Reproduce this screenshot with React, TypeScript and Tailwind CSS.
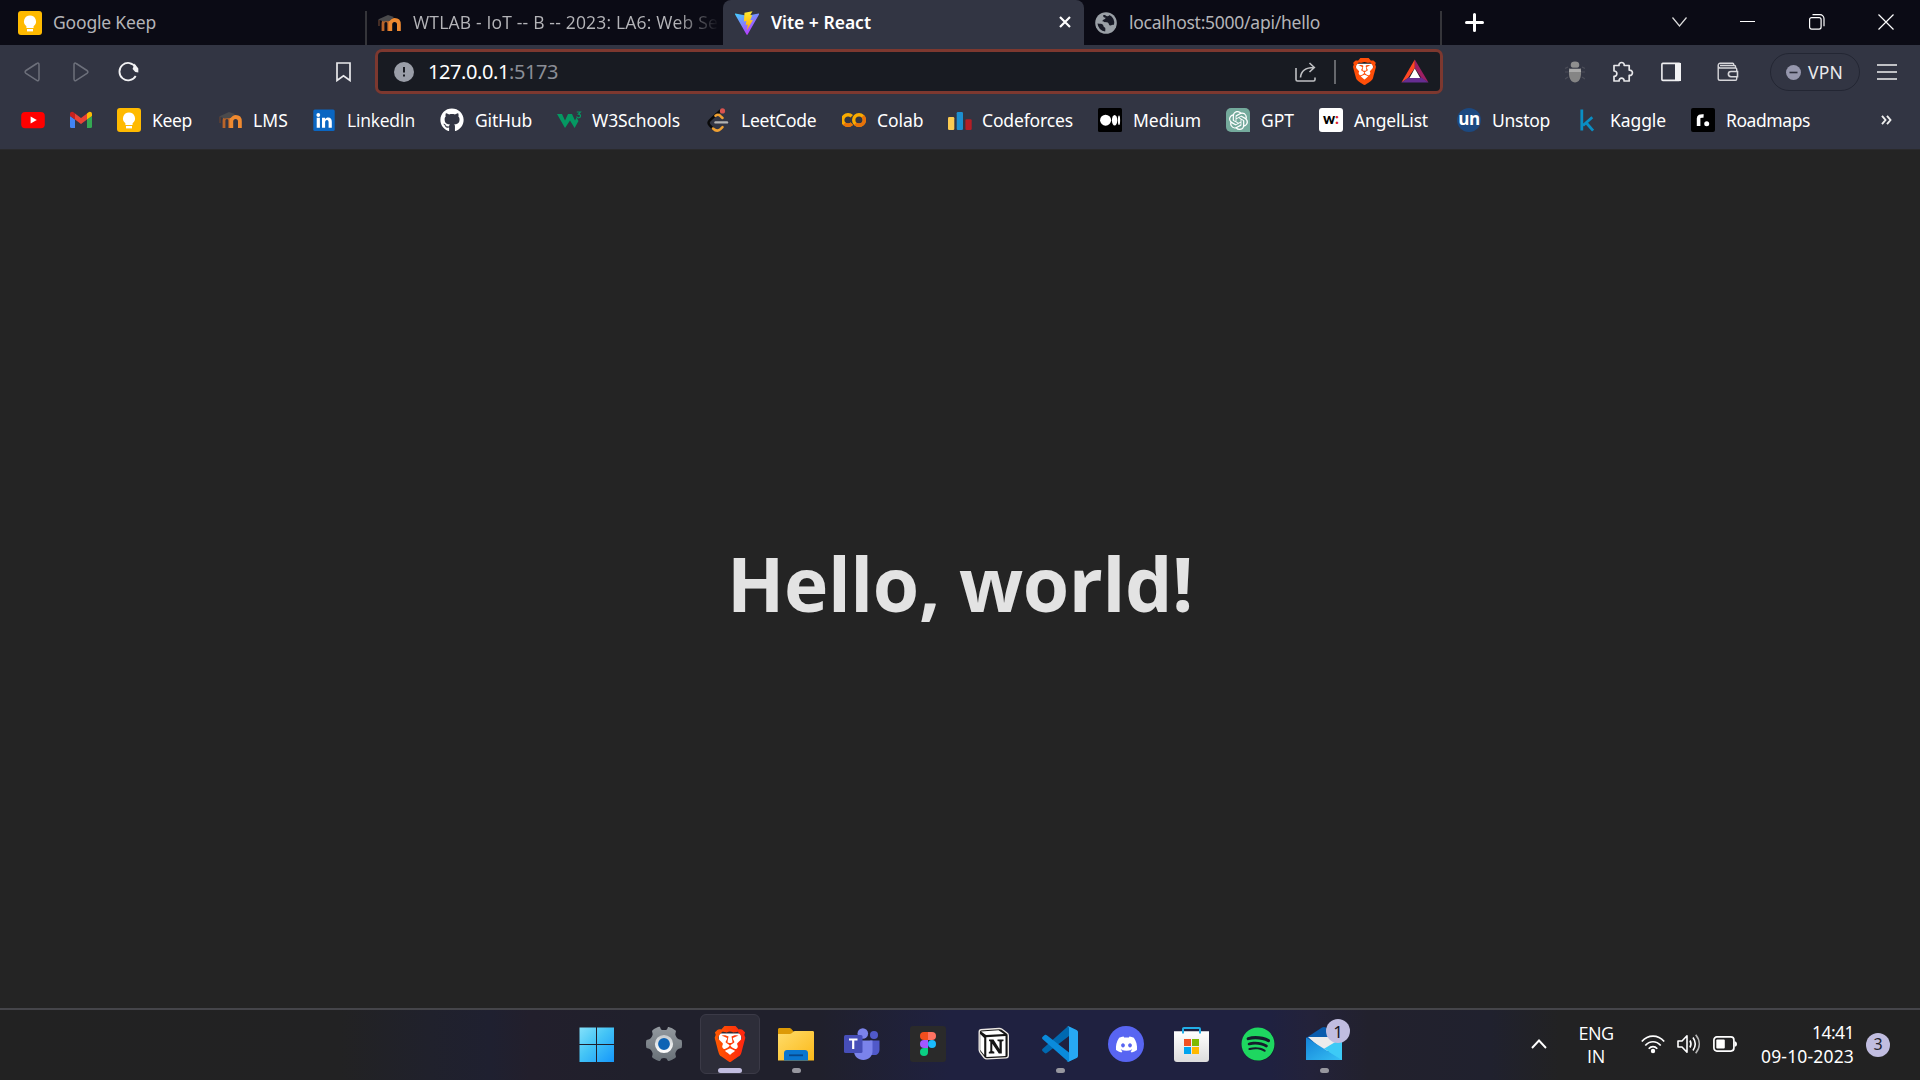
import React, { useLayoutEffect, useRef, useState } from "react";
import { FaGithub, FaSpotify, FaDiscord } from "react-icons/fa";
import { SiBrave, SiOpenai } from "react-icons/si";

const NOTO = "font-['Noto_Sans',sans-serif]";
const OPEN = "font-['Open_Sans',sans-serif]";

/* Tracks its text so that the line is exactly `w` pixels wide. */
function Fit({ w, className = "", children }: { w: number; className?: string; children: string }) {
  const ref = useRef<HTMLSpanElement>(null);
  const [spacing, setSpacing] = useState(0);
  useLayoutEffect(() => {
    const el = ref.current;
    if (!el) return;
    const natural = el.getBoundingClientRect().width;
    setSpacing((w - natural) / children.length);
  }, []);
  return (
    <span ref={ref} className={`inline-block whitespace-pre ${className}`} style={{ letterSpacing: spacing }}>
      {children}
    </span>
  );
}

function Svg({ w, h = w, className = "", children }: { w: number; h?: number; className?: string; children: React.ReactNode }) {
  return (
    <svg width={w} height={h} viewBox={`0 0 ${w} ${h}`} fill="none" className={`block shrink-0 ${className}`}>
      {children}
    </svg>
  );
}

const KeepIcon = () => (
  <Svg w={24}>
    <rect width="24" height="24" rx="3" fill="#ffba00" />
    <path d="M12 4.5a6 6 0 0 0-3.6 10.8v1.7h7.2v-1.7A6 6 0 0 0 12 4.5z" fill="#fff" />
    <rect x="9" y="18" width="6" height="2.4" fill="#fff" />
  </Svg>
);

const MoodleIcon = () => (
  <Svg w={24}>
    <path d="M6 20v-7.5c0-2 1.4-3 3-3s2.700 1 2.700 3V20" stroke="#b9642a" strokeWidth="2.800" />
    <path d="M13.300 20v-6.500c0-3 1.800-4.500 4.300-4.500s4.300 1.500 4.300 4.500V20" stroke="#f08a30" strokeWidth="3.800" />
    <path d="M1 8.500 11 4l6 2-4.500 4-6 .500z" fill="#4a4a4c" />
    <path d="M2 9v6" stroke="#6b4330" strokeWidth="1.200" />
  </Svg>
);

const YoutubeIcon = () => (
  <Svg w={24}>
    <rect x=".2" y="4" width="23.600" height="16.300" rx="4" fill="#f00" />
    <path d="m9.600 8.600 6.200 3.500-6.200 3.500z" fill="#fff" />
  </Svg>
);

const GmailIcon = () => (
  <Svg w={24}>
    <path d="M1 8v10.500A1.500 1.500 0 0 0 2.500 20H6v-8.500z" fill="#4285f4" />
    <path d="M23 8v10.500a1.500 1.500 0 0 1-1.500 1.500H18v-8.500z" fill="#34a853" />
    <path d="M18 5.500v6L23 8V6c0-2-2.200-3-3.800-1.500z" fill="#fbbc04" />
    <path d="M6 5.500v6L1 8V6c0-2 2.200-3 3.800-1.500z" fill="#c5221f" />
    <path d="m6 5.500 6 4.500 6-4.500v6L12 16l-6-4.500z" fill="#ea4335" />
  </Svg>
);

const LinkedInIcon = () => (
  <Svg w={24}>
    <rect x="1.300" y="1.500" width="21.400" height="21.400" rx="1.500" fill="#0a66c2" />
    <circle cx="6.300" cy="7" r="1.900" fill="#fff" />
    <path d="M4.700 9.700h3.200v10H4.700zM10 9.700h3v1.400c.8-1.200 1.800-1.700 3.100-1.700 2.700 0 3.700 1.700 3.700 4.400v5.900h-3.200v-5.300c0-1.500-.4-2.400-1.600-2.400-1.300 0-1.900.9-1.900 2.400v5.300H10z" fill="#fff" />
  </Svg>
);

const ColabIcon = () => (
  <Svg w={24}>
    <path d="M9.800 8.300A5.300 5.300 0 1 0 9.800 15.700" stroke="#f9ab00" strokeWidth="3.400" />
    <path d="M2.300 15.700a5.300 5.300 0 0 0 7.500 0" stroke="#e8710a" strokeWidth="3.400" />
    <circle cx="17" cy="12" r="5.300" stroke="#f9ab00" strokeWidth="3.400" />
    <path d="M20.800 8.200a5.300 5.300 0 0 1-7.500 7.500" stroke="#e8710a" strokeWidth="3.400" />
  </Svg>
);

const CodeforcesIcon = () => (
  <Svg w={25} h={24}>
    <rect x="1" y="9" width="6.300" height="13" rx="1.200" fill="#fbcb52" />
    <rect x="9.700" y="4" width="6.300" height="18" rx="1.200" fill="#1c8fd0" />
    <rect x="18.400" y="11.300" width="6.300" height="10.700" rx="1.200" fill="#b51e26" />
  </Svg>
);

const MediumIcon = () => (
  <Svg w={24}>
    <rect width="24" height="24" rx="1.500" fill="#000" />
    <circle cx="7.600" cy="12.200" r="5.500" fill="#fff" />
    <ellipse cx="16.600" cy="12.200" rx="2.700" ry="5.200" fill="#fff" />
    <ellipse cx="21" cy="12.200" rx="1.100" ry="4.800" fill="#fff" />
  </Svg>
);

const GptIcon = () => (
  <span className="flex size-6 items-center justify-center rounded-tl-[5px] rounded-tr-[5px] rounded-bl-[5px] bg-[#74aa9c]">
    <SiOpenai className="size-[19px] text-white" />
  </span>
);

const LeetIcon = () => (
  <Svg w={24}>
    <path d="M14.500 2.500 3.800 12.300c-1.700 1.700-1.700 3.300 0 5l3.400 3.500" stroke="#090909" strokeWidth="2.500" strokeLinecap="round" />
    <path d="M16.500 10 14 7.600c-1.500-1.200-3-1.100-4.500.1M7 20.500c2.600 2.600 5.400 2.600 7.500.6l2-2" stroke="#f0a132" strokeWidth="2.500" strokeLinecap="round" />
    <path d="M9.500 14.400h11.500" stroke="#b3b3b3" strokeWidth="2.400" strokeLinecap="round" />
    <circle cx="16.500" cy="2.900" r="2.600" fill="#d9534f" />
  </Svg>
);

const AngelIcon = () => (
  <span className="flex size-6 items-center justify-center rounded-[3px] bg-white pb-[3px] font-['Lato',sans-serif] text-[15px] leading-none font-black text-black">
    w<span className="text-[#e0242b]">:</span>
  </span>
);

const UnstopIcon = () => (
  <span className="flex size-6 items-center justify-center rounded-full bg-[#1c4980] pb-[3px] font-['Open_Sans',sans-serif] text-[17px] leading-none font-bold tracking-[-0.5px] text-white">
    un
  </span>
);

const KaggleIcon = () => (
  <Svg w={24}>
    <path d="M6.800 1.500v21M17.300 9.300 8 17.500M10.500 14l7.600 8.600" stroke="#0a8ec4" strokeWidth="2.800" />
  </Svg>
);

const RoadmapIcon = () => (
  <Svg w={24}>
    <rect width="24" height="24" rx="2" fill="#000" />
    <path d="M7.600 18V10.500c0-2 1.400-2.800 5-2.500" stroke="#fff" strokeWidth="3.600" />
    <circle cx="15.700" cy="15.700" r="2.500" fill="#fff" />
  </Svg>
);

const W3Icon = () => (
  <Svg w={25} h={24}>
    <path d="M0 6h5l3 6.500L11 6h4l3 6.500 1.500-3 2 3.500L17.600 20 13 12.500 8 20z" fill="#059862" />
    <path d="M19.800 4h3.600l-2 2.200c3 .2 2.600 3.600.2 3.600-1 0-1.600-.4-2-1.200" stroke="#059862" strokeWidth="1.200" />
  </Svg>
);

const ViteIcon = () => (
  <Svg w={24}>
    <defs>
      <linearGradient id="va" x1="0" y1="0" x2=".6" y2="1">
        <stop stopColor="#41d1ff" />
        <stop offset="1" stopColor="#bd34fe" />
      </linearGradient>
      <linearGradient id="vb" x1="0" y1="0" x2="0" y2="1">
        <stop stopColor="#ffea30" />
        <stop offset="1" stopColor="#ffa800" />
      </linearGradient>
    </defs>
    <path d="M.4 2.600 12 4.700l11.600-2.100c.4 0 .6.400.4.800L12.600 23.500c-.3.500-.8.500-1.100 0L.1 3.400c-.3-.4 0-.9.300-.8z" fill="url(#va)" />
    <path d="m17.500.2-8 1.500-.6 8.700 2.500-.5-.7 4.200 2.100-.6-.9 5.700 6-10.300-2.700.4 2-5h-2z" fill="url(#vb)" />
  </Svg>
);

const GlobeIcon = () => (
  <Svg w={22}>
    <circle cx="11" cy="11" r="10.800" fill="#9aa0a6" />
    <path d="M2.500 11.500c2.500.2 5 .3 5.600 1.500.5 1 .3 2 1.700 2.600.8.400.6 2 .4 3.900A8.700 8.700 0 0 1 2.500 11.500zM8.300 3c-.4 2 .3 2.500 2.300 2.700-.5 2.500-3 1.200-3 3.300 0 1.800 4.600.7 5.700 2 .8.900.4 2.400 2 2.500 1.300.1 2-.8 3.700-.7A8.700 8.700 0 0 0 14.500 3c-.4 1.200-2 1.500-3 .9C10.600 3.400 9.800 2.600 8.300 3z" fill="#181a26" />
  </Svg>
);

function BraveSmall() {
  return (
    <span className="relative flex h-[27px] w-6 items-center justify-center">
      <svg viewBox="0 0 24 24" className="absolute size-[27px]">
        <path d="M4.500 5h15v8.500L12 20.500l-7.500-7z" fill="#fff" />
      </svg>
      <SiBrave className="relative size-[27px] shrink-0 text-[#ff4e08]" />
    </span>
  );
}

function BraveLarge() {
  return (
    <span className="relative flex h-9 w-[30px] items-center justify-center">
      <svg viewBox="0 0 24 24" className="absolute size-9">
        <defs>
          <linearGradient id="lion" x1="0" y1="0" x2="1" y2="0">
            <stop stopColor="#ff5a00" />
            <stop offset="1" stopColor="#ff2410" />
          </linearGradient>
        </defs>
        <path d="M4.500 5h15v8.500L12 20.500l-7.500-7z" fill="#fff" />
      </svg>
      <SiBrave className="relative size-9 shrink-0 fill-[url(#lion)]" />
    </span>
  );
}

const bookmarks: { icon: React.ReactNode; label: string; slot: number; w: number; open?: boolean }[] = [
  { icon: <KeepIcon />, label: "Keep", slot: 41, w: 40 },
  { icon: <MoodleIcon />, label: "LMS", slot: 34, w: 35 },
  { icon: <LinkedInIcon />, label: "LinkedIn", slot: 68, w: 68, open: true },
  { icon: <FaGithub className="size-6 text-white" />, label: "GitHub", slot: 57, w: 57 },
  { icon: <W3Icon />, label: "W3Schools", slot: 89, w: 88 },
  { icon: <LeetIcon />, label: "LeetCode", slot: 76, w: 75.5 },
  { icon: <ColabIcon />, label: "Colab", slot: 45, w: 46.500 },
  { icon: <CodeforcesIcon />, label: "Codeforces", slot: 91, w: 91 },
  { icon: <MediumIcon />, label: "Medium", slot: 68, w: 68 },
  { icon: <GptIcon />, label: "GPT", slot: 33, w: 33 },
  { icon: <AngelIcon />, label: "AngelList", slot: 78, w: 74 },
  { icon: <UnstopIcon />, label: "Unstop", slot: 58, w: 58 },
  { icon: <KaggleIcon />, label: "Kaggle", slot: 56, w: 56 },
  { icon: <RoadmapIcon />, label: "Roadmaps", slot: 84, w: 84 },
];

function TabStrip() {
  return (
    <div className={`flex h-[45px] items-stretch bg-[#0b0b15] text-[17.500px] leading-6 text-[#b4b4b8] ${NOTO}`}>
      <div className="flex w-[365px] items-center pl-[18px]">
        <KeepIcon />
        <Fit w={103} className="ml-[11px] pb-[1px]">Google Keep</Fit>
      </div>
      <div className="mt-[11px] w-[2px] bg-[#35353a]" />
      <div className="flex w-[356px] items-center pl-[10px]">
        <MoodleIcon />
        <div className={`ml-3 w-[306px] pb-[1px] [mask-image:linear-gradient(90deg,#000_86%,transparent)] ${OPEN}`}>
          <Fit w={305}>WTLAB - IoT -- B -- 2023: LA6: Web Se</Fit>
        </div>
      </div>
      <div className="flex w-[361px] items-center rounded-t-[8px] bg-[#323543] pl-3">
        <ViteIcon />
        <Fit w={100} className="ml-3 pb-[1px] font-semibold text-white">Vite + React</Fit>
        <Svg w={12} className="mb-[1px] ml-[188px]">
          <path d="m1 1 10 10M11 1 1 11" stroke="#fff" strokeWidth="2.200" />
        </Svg>
      </div>
      <div className="flex w-[356px] items-center pl-[11px]">
        <GlobeIcon />
        <Fit w={191} className="ml-3 pb-[1px]">localhost:5000/api/hello</Fit>
      </div>
      <div className="mt-[11px] w-[2px] bg-[#35353a]" />
      <div className="flex flex-1 items-center pl-[23px]">
        <Svg w={19}>
          <path d="M9.500 1.500v16M1.500 9.500h16" stroke="#fff" strokeWidth="3" strokeLinecap="round" />
        </Svg>
        <Svg w={15} h={10} className="mb-[2px] ml-[188px]">
          <path d="m.5.5 7 8.500 7-8.500" stroke="#ddd" strokeWidth="1.200" />
        </Svg>
        <Svg w={15} h={2} className="mb-[1px] ml-[53px]">
          <path d="M0 .5h15" stroke="#fff" strokeWidth="1" />
        </Svg>
        <Svg w={16} className="mb-[2px] ml-[54px]">
          <rect x=".6" y="3.600" width="11.500" height="11.500" rx="2" stroke="#fff" strokeWidth="1.200" />
          <path d="M3.500.7H11a4 4 0 0 1 4 4v7.500" stroke="#fff" strokeWidth="1.200" />
        </Svg>
        <Svg w={16} className="mb-[2px] ml-[53px]">
          <path d="m.5.5 15 15M15.500.5l-15 15" stroke="#fff" strokeWidth="1.200" />
        </Svg>
      </div>
    </div>
  );
}

function Toolbar() {
  return (
    <div className={`flex h-[53px] items-start pt-1 text-[20px] ${NOTO}`}>
      <div className="flex h-[46px] w-[375px] items-center">
        <Svg w={16} h={20} className="ml-6">
          <path d="M12.800 1.500 2 8.500c-1.200.8-1.200 2 0 2.800l10.800 7c1.200.8 2.200.3 2.200-1.200V2.700c0-1.500-1-2-2.200-1.200z" stroke="#6d707b" strokeWidth="1.500" />
        </Svg>
        <Svg w={16} h={20} className="ml-[33px]">
          <path d="M3.200 1.500 14 8.500c1.200.8 1.200 2 0 2.800l-10.800 7c-1.200.8-2.200.3-2.200-1.200V2.700c0-1.500 1-2 2.200-1.200z" stroke="#6d707b" strokeWidth="1.500" />
        </Svg>
        <Svg w={21} h={20} className="mb-[1px] ml-[29px]">
          <path d="M17.500 5A8.700 8.700 0 1 0 17.700 14" stroke="#f2f2f4" strokeWidth="1.800" />
          <path d="M16.500 1.500 20.300 6.500v4l-3-.5-2.700-3z" fill="#f2f2f4" />
        </Svg>
        <Svg w={16} h={20} className="ml-[197px]">
          <path d="M1 1h13v17.500L7.500 13.800 1 18.500z" stroke="#e9e9ec" strokeWidth="1.700" />
        </Svg>
      </div>
      <div className="flex h-[45px] w-[1068px] items-center rounded-[7px] border-[3px] border-[#7d382f] bg-[#181b22] pl-4">
        <Svg w={20}>
          <circle cx="10" cy="10" r="10" fill="#9a9ea8" />
          <path d="M10 5v5.500M10 12.500v2" stroke="#181b22" strokeWidth="2" />
        </Svg>
        <Fit w={81} className="ml-[14px] pt-[1px] text-white">127.0.0.1</Fit>
        <Fit w={49} className="pt-[1px] text-[#8b8e96]">:5173</Fit>
        <Svg w={22} h={20} className="ml-[737px]">
          <path d="M1 6v11.500c0 1 .5 1.500 1.500 1.500h16c1 0 1.500-.5 1.500-1.500v-2M5.500 15.500C6 9.500 9.500 5.500 19 5.500M14.500 1 19.300 5.500 14.500 10" stroke="#bfc0c3" strokeWidth="1.600" />
        </Svg>
        <div className="ml-[17px] h-6 w-[2px] bg-[#66686d]" />
        <div className="ml-4">
          <BraveSmall />
        </div>
        <Svg w={28} h={24} className="mb-[1px] ml-[25px]">
          <path d="M13.800.5V9L7 19 .4 23.500z" fill="#ff4724" />
          <path d="M13.800.5V9L20.500 19l7 4.500z" fill="#9e1f63" />
          <path d="M.4 23.500 7.500 18.500h13l7 5z" fill="#662d91" />
          <path d="m13.800 9.500 5.400 9.500H8.500z" fill="#fff" />
        </Svg>
      </div>
      <div className="flex h-[46px] flex-1 items-center">
        <Svg w={20} h={22} className="ml-[122px]">
          <path d="M3 6 0 7.500M3 11H0M3 16l-3 2M17 6l3 1.500M17 11h3M17 16l3 2" stroke="#4b4d58" strokeWidth="1.200" />
          <ellipse cx="10" cy="4" rx="4.300" ry="3.400" fill="#8f8f8f" />
          <path d="M4.500 7h11c1.500 5 .5 14.500-5.500 14.500S3 12 4.500 7z" fill="#858585" />
          <path d="M4.500 7.500h11l.7 3.500H3.900z" fill="#aaa" />
          <path d="M4.500 7.200h11" stroke="#323543" strokeWidth="1" />
        </Svg>
        <Svg w={22} className="ml-[27px]">
          <path d="M2 4.500h5c-.6-4 5.800-4 5.200 0h5v4.600c4.300-.6 4.300 6 0 5.300V20h-5.100c.4-3.900-5.400-3.900-5 0H2v-4.700c3.800.3 3.800-5.600 0-5.300z" stroke="#e6e6e9" strokeWidth="1.700" strokeLinejoin="round" />
        </Svg>
        <Svg w={20} className="ml-[27px]">
          <rect x=".9" y="1.400" width="18.200" height="17" rx="1" stroke="#efeff1" strokeWidth="1.600" />
          <path d="M14 1h6v18h-6z" fill="#f2f2f4" />
        </Svg>
        <Svg w={22} h={20} className="ml-9">
          <path d="M18.500 6V4.500c0-.5-.4-1-1-1H3M1.200 3v13.500c0 1 .8 1.800 1.800 1.800h15.500c.7 0 1.200-.4 1.200-1.200V7c0-.6-.5-1-1.200-1H3C1.800 6 1.200 5 1.200 3.600c0-1.500.8-2.400 2-2.400h12.500c.6 0 1 .4 1 1v1" stroke="#d6d6da" strokeWidth="1.400" />
          <path d="M20.500 9.500h-6.500c-3.500 0-3.500 5.200 0 5.200h6.500z" fill="#323543" stroke="#d6d6da" strokeWidth="1.600" />
        </Svg>
        <div className="ml-[31px] flex h-[38px] w-[90px] items-center rounded-full border border-[#232633] pl-[15px]">
          <Svg w={15}>
            <circle cx="7.500" cy="7.500" r="7.500" fill="#9697ad" />
            <path d="M3.500 7.500h8" stroke="#2b2d3b" strokeWidth="1.600" />
          </Svg>
          <Fit w={35} className="ml-[7px] text-[17.500px] leading-6 text-[#eaeaec]">VPN</Fit>
        </div>
        <Svg w={20} h={16} className="ml-[17px]">
          <path d="M0 1h20M0 8h20M0 15h20" stroke="#efeff1" strokeWidth="1.600" />
        </Svg>
      </div>
    </div>
  );
}

function BookmarkBar() {
  return (
    <div className={`flex h-[51px] items-center gap-6 pb-[7px] pl-[21px] text-[17.500px] leading-6 text-white ${NOTO}`}>
      <YoutubeIcon />
      <GmailIcon />
      {bookmarks.map((b) => (
        <div key={b.label} className="flex shrink-0 items-center gap-3">
          <span className="w-6 shrink-0">{b.icon}</span>
          <span className="shrink-0 pb-[1px]" style={{ width: b.slot }}>
            <Fit w={b.w} className={b.open ? `-ml-[1px] ${OPEN}` : "-ml-[1px]"}>{b.label}</Fit>
          </span>
        </div>
      ))}
      <Svg w={11} h={10} className="ml-[46px]">
        <path d="m1 .8 3.500 4.200L1 9.200M6 .8 9.500 5 6 9.200" stroke="#eee" strokeWidth="1.900" />
      </Svg>
    </div>
  );
}

const WindowsIcon = () => (
  <Svg w={36} className="mt-[1px] mr-[3px]">
    <defs>
      <linearGradient id="win" x1="0" y1="0" x2="35" y2="35" gradientUnits="userSpaceOnUse">
        <stop stopColor="#86e2fb" />
        <stop offset=".45" stopColor="#45c5f6" />
        <stop offset="1" stopColor="#1597fb" />
      </linearGradient>
    </defs>
    <path d="M.5.500H17V17H.5zM18 .5h17V17H18zM.5 18H17v17H.5zM18 18h17v17H18z" fill="url(#win)" />
  </Svg>
);

const SettingsIcon = () => (
  <Svg w={36}>
    <defs>
      <linearGradient id="gear" x1="0" y1="0" x2="0" y2="1">
        <stop stopColor="#93999f" />
        <stop offset="1" stopColor="#697178" />
      </linearGradient>
      <linearGradient id="ring" x1="0" y1="0" x2="0" y2="1">
        <stop stopColor="#c9cdd0" />
        <stop offset="1" stopColor="#fdfdfd" />
      </linearGradient>
    </defs>
    <path d="M11 1.500c1-.8 2.300-1 3-.5l1 2.500c1.500.8 4.500.8 6 0L22 1c.7-.5 6.500 2 8 4l-.7 3.300c.3 2 1.800 4.300 3.500 5l2.700.8c.7 1.500.7 6.300 0 7.800l-2.700.8c-1.700.8-3.200 3-3.500 5L30 31c-1.500 2-7.300 4.500-8 4l-1.500-2.500c-1.500-.7-3.500-.7-5 0L14 35c-.7.500-6.500-2-8-4l.7-3.300c-.3-2-1.800-4.200-3.500-5L.5 21.900c-.7-1.500-.7-6.300 0-7.800l2.700-.8c1.700-.7 3.200-3 3.500-5L6 5c.8-1.300 3-2.600 5-3.500z" fill="url(#gear)" />
    <circle cx="18" cy="18" r="7.500" fill="#0d63b4" stroke="url(#ring)" strokeWidth="3.200" />
  </Svg>
);

const FolderIcon = () => (
  <Svg w={36}>
    <defs>
      <linearGradient id="fold" x1="0" y1="0" x2="1" y2="1">
        <stop stopColor="#ffdc6a" />
        <stop offset="1" stopColor="#fbb919" />
      </linearGradient>
    </defs>
    <path d="M0 3.500C0 2.500.8 2 1.500 2H11c1.500 0 2 .5 2.800 1.500L16 6v6H0z" fill="#dd9a06" />
    <path d="M0 8h11.500c1 0 1.800-.3 2.500-1l1-1c.6-.7 1.200-1 2-1h17.500c1 0 1.500.5 1.500 1.500V34.500H0z" fill="url(#fold)" />
    <path d="M6 34.500V27c0-2 1.300-3 3-3h18c1.700 0 3 1 3 3v7.500z" fill="#0a76cf" />
    <path d="M11 29.300h14" stroke="#07488b" strokeWidth="1.800" />
  </Svg>
);

const TeamsIcon = () => (
  <Svg w={36}>
    <circle cx="30" cy="9" r="4" fill="#5059c9" />
    <circle cx="18.800" cy="7.500" r="5.300" fill="#7b83eb" />
    <path d="M26 14.500h9.500v9c0 3.500-2 5.500-5 5.500H26z" fill="#5059c9" />
    <path d="M10 14.500h18.500V25c0 5.500-4 9-9.200 9S10 30.500 10 25z" fill="#7b83eb" />
    <rect y="9" width="18.500" height="18" rx="1.500" fill="#464eb8" />
    <path d="M5 13.500h8.500M9.200 13.500v9.500" stroke="#fff" strokeWidth="2.200" />
  </Svg>
);

const FigmaIcon = () => (
  <Svg w={36}>
    <rect width="36" height="36" rx="3" fill="#2a2a2a" />
    <path d="M14 6h4v8h-4a4 4 0 0 1 0-8z" fill="#f24e1e" />
    <path d="M18 6h4a4 4 0 0 1 0 8h-4z" fill="#ff7262" />
    <path d="M14 14h4v8h-4a4 4 0 0 1 0-8z" fill="#a259ff" />
    <circle cx="22" cy="18" r="4" fill="#1abcfe" />
    <path d="M14 22h4v4a4 4 0 1 1-4-4z" fill="#0acf83" />
  </Svg>
);

const NotionIcon = () => (
  <Svg w={36}>
    <path d="M4.500 3.800 23 2.500c1.200-.1 2 .1 3 .8l5 3.700c1 .7 1.300 1.300 1.300 2.500v20c0 1.500-.8 2.300-2.300 2.400l-19 1c-1.200 0-2-.3-2.800-1.200l-4-5.200c-.7-1-1-1.700-1-2.800V6.200c0-1.400.6-2.300 2-2.400z" fill="#151515" stroke="#ece8e4" strokeWidth="1.400" />
    <path d="M5 5.500 22.500 4.300 28 8l-18 1.100zM4.200 8l4 4v17l-4-5z" fill="#fff" />
    <path d="M10.300 11.300 29.500 10v20l-19.200 1z" fill="#fff" />
    <path d="M13 13.500h4.500l6 9.500v-7.500l-2-.5v-1.500h6v1.500l-1.700.5V27.500h-3l-6.500-9.700v7.200l2 .7V27.500h-5.500v-1.500l1.500-.7V15.500l-1.300-.5z" fill="#151515" />
  </Svg>
);

const VsCodeIcon = () => (
  <Svg w={36}>
    <path d="M26 .3 35 4.500 27 10 4.800 27c-.8.500-1.500.5-2.100 0L.7 25.200c-.8-.8-.8-1.700 0-2.500z" fill="#0069b0" />
    <path d="M4.800 9.200 27 26.500l8 5-8.800 4.300L.7 13.300c-.8-.8-.8-1.700 0-2.500L2.700 9c.6-.5 1.300-.5 2.100.2z" fill="#0a8bdc" />
    <path d="M26.500.3 34.500 4c1 .5 1.500 1.200 1.500 2.300v23.400c0 1.100-.5 1.800-1.500 2.300l-8 3.800c-.8.300-1.500.2-2.200-.5 1 .8 2.700 0 2.700-1.300V2c0-1.300-1.700-2-2.700-1.200.7-.7 1.400-.8 2.200-.5z" fill="#27a8f3" />
  </Svg>
);

const DiscordIcon = () => (
  <span className="flex size-9 items-center justify-center rounded-full bg-[#5865f2]">
    <FaDiscord className="size-[23px] text-white" />
  </span>
);

const StoreIcon = () => (
  <Svg w={36}>
    <defs>
      <linearGradient id="store" x1="0" y1="0" x2="0" y2="1">
        <stop stopColor="#fff" />
        <stop offset="1" stopColor="#dcdcdc" />
      </linearGradient>
    </defs>
    <path d="M0 5.300h35V33c0 2-1 3-3 3H3c-2 0-3-1-3-3z" fill="url(#store)" />
    <path d="M9 7.500V3c0-.8.300-1.100 1-1.100h15c.7 0 1 .3 1 1.100v4.500" stroke="#22aee8" strokeWidth="2" />
    <path d="M10 13h7v7h-7z" fill="#f25022" />
    <path d="M18 13h7v7h-7z" fill="#7fba00" />
    <path d="M10 21h7v7h-7z" fill="#00a4ef" />
    <path d="M18 21h7v7h-7z" fill="#ffb900" />
  </Svg>
);

const SpotifyIcon = () => (
  <span className="flex size-[33px] items-center justify-center rounded-full bg-[#151c2c]">
    <FaSpotify className="size-[34px] shrink-0 text-[#1ed760]" />
  </span>
);

const MailIcon = () => (
  <span className="relative block">
    <Svg w={36}>
      <defs>
        <linearGradient id="mail" x1="0" y1="0" x2="1" y2="1">
          <stop stopColor="#1482d8" />
          <stop offset="1" stopColor="#36c0f4" />
        </linearGradient>
      </defs>
      <path d="M0 12 16 1.500c1.500-.8 2.500-.8 4 0L36 12v5H0z" fill="#0a5cad" />
      <path d="M2 11h32v9L19 26z" fill="#ececec" />
      <path d="M36 12v22H14z" fill="#35c4f5" />
      <path d="M0 11.500 36 34H0z" fill="url(#mail)" />
      <path d="M18 22.700 36 12v22z" fill="#3dcaf6" />
    </Svg>
    <span className="absolute -top-[7px] left-5 flex size-6 items-center justify-center rounded-full bg-[#c1bde0] text-[17px] leading-none text-[#16161e]">1</span>
  </span>
);

const apps: { icon: React.ReactNode; mark?: "active" | "open" }[] = [
  { icon: <WindowsIcon /> },
  { icon: <SettingsIcon /> },
  { icon: <BraveLarge />, mark: "active" },
  { icon: <FolderIcon />, mark: "open" },
  { icon: <TeamsIcon /> },
  { icon: <FigmaIcon /> },
  { icon: <NotionIcon /> },
  { icon: <VsCodeIcon />, mark: "open" },
  { icon: <DiscordIcon /> },
  { icon: <StoreIcon /> },
  { icon: <SpotifyIcon /> },
  { icon: <MailIcon />, mark: "open" },
];

function Taskbar() {
  return (
    <div className={`flex h-[72px] border-t-2 border-[#45454a] bg-[linear-gradient(90deg,#222222_0px,#222223_340px,#20212c_430px,#1f2030_490px,#221f2c_530px,#20202c_640px,#20202c_820px,#1f2140_950px,#1f2140_1270px,#23223a_1310px,#22212d_1370px,#20212e_1490px,#222223_1560px,#222222_1920px)] text-white ${NOTO}`}>
      <div className="flex flex-1 pt-1 pl-[565px]">
        {apps.map((a, i) => (
          <div key={i} className="flex w-[66px] justify-center">
            <div
              className={
                a.mark === "active"
                  ? "relative flex h-[60px] w-[60px] items-center justify-center rounded-[6px] border border-[#3b3a47] bg-[#2d2d39]"
                  : "relative flex h-[60px] w-[60px] items-center justify-center"
              }
            >
              {a.icon}
              {a.mark === "active" && <span className="absolute bottom-0 h-[5px] w-6 rounded-full bg-[#c1bde0]" />}
              {a.mark === "open" && <span className="absolute bottom-[1px] h-[5px] w-[9px] rounded-full bg-[#97979f]" />}
            </div>
          </div>
        ))}
      </div>
      <div className="flex w-[389px] items-center pb-[2px]">
        <Svg w={16} h={10}>
          <path d="m1 9 7-7.500L15 9" stroke="#fff" strokeWidth="1.900" />
        </Svg>
        <div className={`ml-7 flex w-[42px] flex-col items-center pt-[1px] text-[18px] leading-[23px] ${OPEN}`}>
          <Fit w={35}>ENG</Fit>
          <Fit w={18}>IN</Fit>
        </div>
        <Svg w={24} h={20} className="ml-6">
          <path d="M.8 7.500c6.300-7.200 16.100-7.200 22.400 0M4.300 11.500c4.500-5 10.900-5 15.400 0M7.700 14.800c2.600-2.900 6-2.900 8.600 0" stroke="#fff" strokeWidth="1.700" />
          <circle cx="12" cy="17" r="2.200" fill="#fff" />
        </Svg>
        <Svg w={24} h={20} className="ml-3">
          <path d="M1 7h4l5-5.200v16.400L5 13H1z" stroke="#fff" strokeWidth="1.600" strokeLinejoin="round" />
          <path d="M13 6.500c1.300 2.300 1.300 4.700 0 7M16 3.500c2.800 4 2.800 9 0 13" stroke="#fff" strokeWidth="1.600" />
          <path d="M18.700.7c4.700 5.800 4.700 12.800 0 18.600" stroke="#b5b5b5" strokeWidth="1.600" />
        </Svg>
        <Svg w={25} h={16} className="ml-3">
          <rect x=".9" y=".9" width="20" height="14.200" rx="3" stroke="#fff" strokeWidth="1.700" />
          <rect x="3.300" y="3.500" width="8.500" height="9" rx="1" fill="#fff" />
          <path d="M21.500 5.200c3.300.3 3.300 5.300 0 5.600z" fill="#fff" />
        </Svg>
        <div className="-mt-[1px] ml-[23px] flex w-[93px] flex-col items-end text-[17.500px] leading-6">
          <Fit w={42}>14:41</Fit>
          <Fit w={93}>09-10-2023</Fit>
        </div>
        <span className="mt-[1px] ml-3 flex size-6 items-center justify-center rounded-full bg-[#c1bde0] pb-[1px] text-[16px] leading-none text-[#22222c]">3</span>
      </div>
    </div>
  );
}

export default function App() {
  return (
    <div className="flex h-[1080px] w-[1920px] flex-col overflow-hidden bg-[#242424]">
      <TabStrip />
      <div className="bg-[#323543]">
        <Toolbar />
        <BookmarkBar />
      </div>
      <main className="flex flex-1 items-center justify-center border-t border-[#2a2a2c]">
        <h1 className={`mt-[9px] text-[75px] leading-none font-bold text-[#e3e3e3] ${OPEN}`}>
          <Fit w={466}>Hello, world!</Fit>
        </h1>
      </main>
      <Taskbar />
    </div>
  );
}
